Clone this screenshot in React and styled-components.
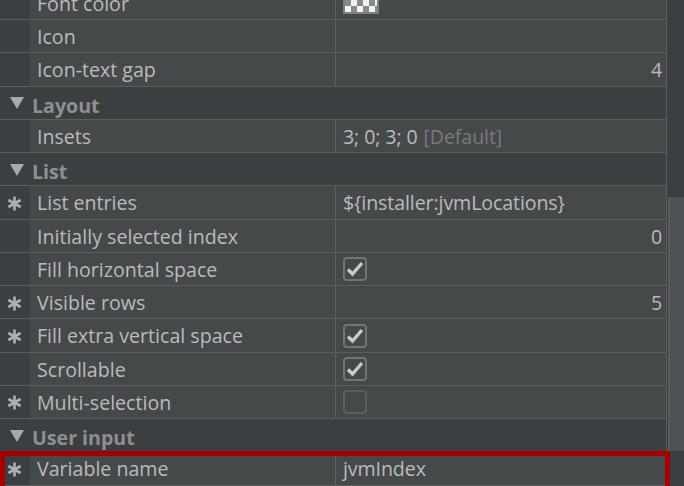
import React from "react";
import styled, { createGlobalStyle, css } from "styled-components";

const Global = createGlobalStyle`
  html, body { margin: 0; padding: 0; background: #3c3f41; overflow: hidden; }
  body { font-family: "Open Sans", "Noto Sans", sans-serif; }
`;

const Frame = styled.div`
  display: flex;
  width: 684px;
  height: 486px;
  overflow: hidden;
  background: #3c3f41;
`;

const Table = styled.div`
  width: 667px;
  flex: none;
  border-right: 1px solid #5b5e60;
  box-sizing: border-box;
  display: flex;
  flex-direction: column;
  margin-top: -13.25px;
`;

const Row = styled.div`
  position: relative;
  display: grid;
  grid-template-columns: 30px 306px 1fr;
  height: 32.25px;
  border-bottom: 1px solid #5b5e60;
  flex: none;
  ${(p) =>
    p.$highlighted &&
    css`
      &::after {
        content: "";
        position: absolute;
        left: 0;
        right: -4px;
        top: -1px;
        height: 40px;
        border: 5px solid #a80000;
        box-sizing: border-box;
        pointer-events: none;
      }
    `}
`;

const Gutter = styled.div`
  background: #3c3f41;
  display: flex;
  align-items: center;
  justify-content: center;
  padding-right: 2px;
  padding-top: 2px;
`;

const NameCell = styled.div`
  background: #45494a;
  border-right: 1px solid #5b5e60;
  display: flex;
  align-items: center;
  padding-left: 7px;
  padding-top: 1px;
  color: #bbbbbb;
  font-size: 19.6px;
  white-space: nowrap;
`;

const ValueCell = styled.div`
  background: #45494a;
  display: flex;
  align-items: center;
  justify-content: ${(p) => (p.$right ? "flex-end" : "flex-start")};
  padding: 1px 4px 0 7px;
  color: #bbbbbb;
  font-size: 19.6px;
  letter-spacing: -0.1px;
  white-space: nowrap;
`;

const Muted = styled.span`
  color: #787a7c;
  margin-left: 6px;
`;

const HeaderRow = styled.div`
  display: flex;
  align-items: center;
  height: 32.25px;
  border-bottom: 1px solid #5b5e60;
  background: #3c3f41;
  flex: none;
`;

const HeaderLabel = styled.span`
  color: #8d8f91;
  font-weight: 700;
  font-size: 19.6px;
  margin-left: 8px;
  padding-top: 5px;
`;

const Triangle = styled.svg`
  margin-left: 10px;
  flex: none;
  margin-top: 1px;
`;

const Box = styled.div`
  width: 24px;
  height: 24px;
  box-sizing: border-box;
  border: 2px solid ${(p) => (p.$checked ? "#727577" : "#5c5f61")};
  border-radius: 4px;
  display: flex;
  align-items: center;
  justify-content: center;
`;

const Checker = styled.div`
  width: 36px;
  height: 22px;
  box-sizing: border-box;
  border: 2px solid #7d7f81;
  background-color: #f2f2f2;
  background-image: linear-gradient(45deg, #8a8a8a 25%, transparent 25%, transparent 75%, #8a8a8a 75%),
    linear-gradient(45deg, #8a8a8a 25%, transparent 25%, transparent 75%, #8a8a8a 75%);
  background-size: 12px 12px;
  background-position: 0 0, 6px 6px;
`;

const Scrollbar = styled.div`
  flex: 1;
  display: flex;
  flex-direction: column;
  padding-top: 197px;
`;

const Thumb = styled.div`
  height: 254px;
  margin-left: 1px;
  border-left: 2px solid #5a5d5f;
  background: #4e5254;
`;

const Asterisk = () => (
  <svg width="15" height="15" viewBox="0 0 15 15">
    <g stroke="#aeb0b2" strokeWidth="2.6" strokeLinecap="butt">
      <line x1="7.5" y1="0.5" x2="7.5" y2="14.5" />
      <line x1="1.4" y1="4" x2="13.6" y2="11" />
      <line x1="1.4" y1="11" x2="13.6" y2="4" />
    </g>
  </svg>
);

const Check = ({ checked }) => (
  <Box $checked={checked}>
    {checked && (
      <svg width="18" height="16" viewBox="0 0 18 16">
        <path d="M2 8.5 L6.5 13 L16 2" fill="none" stroke="#c8cacc" strokeWidth="3.4" />
      </svg>
    )}
  </Box>
);

const Header = ({ label }) => (
  <HeaderRow>
    <Triangle width="14" height="12" viewBox="0 0 14 12">
      <path d="M0 0 H14 L7 12 Z" fill="#a7a9ab" />
    </Triangle>
    <HeaderLabel>{label}</HeaderLabel>
  </HeaderRow>
);

const Prop = ({ star, name, children, right, highlighted }) => (
  <Row $highlighted={highlighted}>
    <Gutter>{star && <Asterisk />}</Gutter>
    <NameCell>{name}</NameCell>
    <ValueCell $right={right}>{children}</ValueCell>
  </Row>
);

export default function App() {
  return (
    <>
      <Global />
      <Frame>
        <Table>
          <Prop name="Font color">
            <Checker />
          </Prop>
          <Prop name="Icon" />
          <Prop name="Icon-text gap" right>
            4
          </Prop>
          <Header label="Layout" />
          <Prop name="Insets">
            3; 0; 3; 0<Muted>[Default]</Muted>
          </Prop>
          <Header label="List" />
          <Prop star name="List entries">
            {"${installer:jvmLocations}"}
          </Prop>
          <Prop name="Initially selected index" right>
            0
          </Prop>
          <Prop name="Fill horizontal space">
            <Check checked />
          </Prop>
          <Prop star name="Visible rows" right>
            5
          </Prop>
          <Prop star name="Fill extra vertical space">
            <Check checked />
          </Prop>
          <Prop name="Scrollable">
            <Check checked />
          </Prop>
          <Prop star name="Multi-selection">
            <Check />
          </Prop>
          <Header label="User input" />
          <Prop star name="Variable name" highlighted>
            jvmIndex
          </Prop>
        </Table>
        <Scrollbar>
          <Thumb />
        </Scrollbar>
      </Frame>
    </>
  );
}
